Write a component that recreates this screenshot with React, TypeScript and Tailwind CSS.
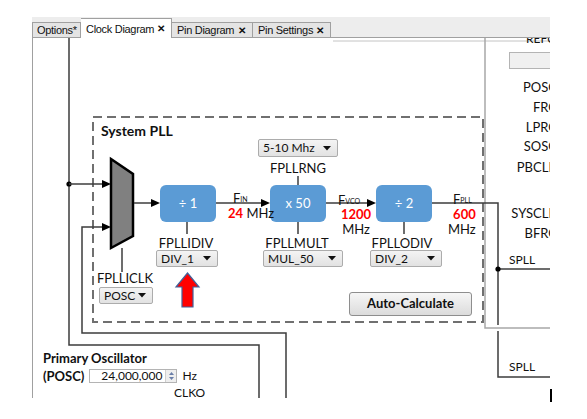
import React from "react";

const ui = "font-['Lato','Noto_Sans',sans-serif]";

function Caret() {
  return (
    <svg width="8" height="5" viewBox="0 0 8 5" className="shrink-0">
      <path d="M0 0 L8 0 L4 4.5 Z" fill="#111" />
    </svg>
  );
}

function Dropdown({ label, className }: { label: string; className: string }) {
  return (
    <div
      className={`absolute flex items-center justify-between pl-[4px] pr-[6px] rounded-[2px] border border-[#acacac] bg-gradient-to-b from-[#f4f4f4] to-[#e2e2e2] text-[12px] leading-none text-[#111] ${className}`}
    >
      <span>{label}</span>
      <Caret />
    </div>
  );
}

function Block({ label, className }: { label: string; className: string }) {
  return (
    <div
      className={`absolute top-[147px] w-[56px] h-[37px] rounded-[6px] bg-[#5b9bd5] flex items-center justify-center text-white text-[13px] ${className}`}
    >
      {label}
    </div>
  );
}

function Label({ text, className }: { text: string; className: string }) {
  return (
    <div className={`absolute w-[100px] text-center text-[13px] leading-[16px] text-[#111] ${className}`}>
      {text}
    </div>
  );
}

function Freq({ sub }: { sub: string }) {
  return (
    <span className="text-[13px] leading-[16px] text-[#111]">
      F<span className="text-[7px] align-[1px]">{sub}</span>
    </span>
  );
}

function Tab({ label, active, first }: { label: string; active?: boolean; first?: boolean }) {
  return (
    <div
      className={`flex justify-between border border-b-0 border-[#a0a0a0] tracking-[-0.3px] ${
        first ? "" : "border-l-0"
      } ${active ? "h-[20px] -mb-px bg-white items-start pt-[2px]" : "h-[15px] bg-[#e4e4e4] items-center"} ${
        label === "Options*" ? "w-[49px] pl-[4px]" : "pl-[5px] pr-[6px]"
      } ${label === "Clock Diagram" ? "w-[91px]" : label === "Pin Diagram" ? "w-[81px]" : label === "Pin Settings" ? "w-[78px]" : ""}`}
    >
      <span>{label}</span>
      {label !== "Options*" && <span className="font-bold text-[10px]">✕</span>}
    </div>
  );
}

const panelLabels = [
  { text: "POSC", gap: "" },
  { text: "FRC", gap: "mt-[4px]" },
  { text: "LPRC", gap: "mt-[4px]" },
  { text: "SOSC", gap: "mt-[3px]" },
  { text: "PBCLK", gap: "mt-[5px]" },
  { text: "SYSCLK", gap: "mt-[30px]" },
  { text: "BFRC", gap: "mt-[4px]" },
];

export default function App() {
  const arrow = (x: number, y: number) => `${x - 9},${y - 4} ${x},${y} ${x - 9},${y + 4}`;

  return (
    <div className={`relative w-[587px] h-[419px] bg-white overflow-hidden ${ui}`}>
      {/* tab strip */}
      <div className="pt-[17px] pl-[32px]">
        <div className="w-[518px] h-[21px] bg-[#ededed] flex items-end border-b border-[#a0a0a0] font-['Liberation_Sans',sans-serif] text-[11px] text-[#111]">
          <Tab label="Options*" first />
          <Tab label="Clock Diagram" active />
          <Tab label="Pin Diagram" />
          <Tab label="Pin Settings" />
        </div>
      </div>

      {/* diagram canvas */}
      <div className="ml-[32px] relative w-[518px] h-[360px] border-l border-[#a0a0a0] overflow-hidden">
        <svg className="absolute inset-0" width="518" height="360" viewBox="32 38 518 360">
          <line x1="332" y1="41" x2="550" y2="41" stroke="#c4c4c4" strokeWidth="1" />
          {/* right panel border */}
          <polyline points="484,38 484,328 550,328" fill="none" stroke="#a8a8a8" strokeWidth="1.5" />
          {/* dashed System PLL frame */}
          <rect x="92" y="117" width="390" height="205" fill="none" stroke="#707070" strokeWidth="2" strokeDasharray="9 5" />
          {/* outer feed lines */}
          <polyline points="68,38 68,345 258,345 258,400" fill="none" stroke="#3c3c3c" strokeWidth="1.5" />
          <circle cx="68" cy="184" r="2.6" fill="#000" />
          <line x1="68" y1="184" x2="103" y2="184" stroke="#3c3c3c" strokeWidth="1.5" />
          <polygon points={arrow(110, 184)} fill="#000" />
          <polyline points="285,400 285,333 81,333 81,227 103,227" fill="none" stroke="#3c3c3c" strokeWidth="1.5" />
          <polygon points={arrow(110, 227)} fill="#000" />
          {/* mux */}
          <polygon points="110,159 132,174 132,236 110,248" fill="#808080" stroke="#000" strokeWidth="2.5" strokeLinejoin="miter" />
          <line x1="121" y1="248" x2="121" y2="272" stroke="#3c3c3c" strokeWidth="1.5" />
          <line x1="133" y1="203" x2="152" y2="203" stroke="#3c3c3c" strokeWidth="1.5" />
          <polygon points={arrow(159, 203)} fill="#000" />
          {/* block links */}
          <line x1="215" y1="203" x2="262" y2="203" stroke="#3c3c3c" strokeWidth="1.5" />
          <polygon points={arrow(269, 203)} fill="#000" />
          <line x1="325" y1="203" x2="368" y2="203" stroke="#3c3c3c" strokeWidth="1.5" />
          <polygon points={arrow(375, 203)} fill="#000" />
          <polyline points="431,203 497,203 497,325" fill="none" stroke="#3c3c3c" strokeWidth="1.5" />
          <polyline points="497,331 497,377 550,377" fill="none" stroke="#3c3c3c" strokeWidth="1.5" />
          <line x1="497" y1="269" x2="550" y2="269" stroke="#3c3c3c" strokeWidth="1.5" />
          <circle cx="497" cy="269" r="2.6" fill="#000" />
          {/* stubs */}
          <line x1="186" y1="222" x2="186" y2="234" stroke="#3c3c3c" strokeWidth="1.5" />
          <line x1="297" y1="222" x2="297" y2="234" stroke="#3c3c3c" strokeWidth="1.5" />
          <line x1="297" y1="176" x2="297" y2="185" stroke="#3c3c3c" strokeWidth="1.5" />
          <line x1="403" y1="222" x2="403" y2="234" stroke="#3c3c3c" strokeWidth="1.5" />
          {/* red pointer */}
          <polygon points="186.5,273 198,287 192,287 192,307 181,307 181,287 175,287" fill="#ff0000" stroke="#41619a" strokeWidth="1.2" />
        </svg>

        <div className="absolute left-[68px] top-[84px] text-[14px] leading-[18px] font-bold text-[#111]">System PLL</div>

        <Block label="÷ 1" className="left-[127px]" />
        <Block label="x 50" className="left-[237px]" />
        <Block label="÷ 2" className="left-[343px]" />

        <Dropdown label="5-10 Mhz" className="left-[225px] top-[101px] w-[80px] h-[18px]" />
        <Dropdown label="DIV_1" className="left-[123px] top-[212px] w-[62px] h-[17px]" />
        <Dropdown label="MUL_50" className="left-[230px] top-[212px] w-[80px] h-[17px]" />
        <Dropdown label="DIV_2" className="left-[337px] top-[212px] w-[72px] h-[17px]" />
        <Dropdown label="POSC" className="left-[66px] top-[249px] w-[54px] h-[17px]" />

        <Label text="FPLLRNG" className="left-[215px] top-[122px]" />
        <Label text="FPLLIDIV" className="left-[103px] top-[197px]" />
        <Label text="FPLLMULT" className="left-[214px] top-[197px]" />
        <Label text="FPLLODIV" className="left-[319px] top-[197px]" />
        <Label text="FPLLICLK" className="left-[42px] top-[232px]" />

        <div className="absolute left-[200px] top-[147px]"><Freq sub="IN" /></div>
        <div className="absolute left-[195px] top-[167px] text-[13px] leading-[16px] text-[#111]">
          <span className="font-bold text-[#ff0000]">24</span> MHz
        </div>
        <div className="absolute left-[305px] top-[149px]"><Freq sub="VCO" /></div>
        <div className="absolute left-[308px] top-[169px] flex flex-col items-center text-[13px] leading-[15px] text-[#111]">
          <span className="font-bold text-[#ff0000]">1200</span>
          <span>MHz</span>
        </div>
        <div className="absolute left-[420px] top-[148px]"><Freq sub="PLL" /></div>
        <div className="absolute left-[415px] top-[169px] flex flex-col items-end text-[13px] leading-[15px] text-[#111]">
          <span className="font-bold text-[#ff0000]">600</span>
          <span>MHz</span>
        </div>

        <div className="absolute left-[316px] top-[254px] w-[123px] h-[24px] rounded-[3px] border border-[#8e8e8e] bg-gradient-to-b from-[#f6f6f6] to-[#dcdcdc] flex items-center justify-center text-[13px] font-bold text-[#111]">
          Auto-Calculate
        </div>

        {/* right panel (scrolled, clipped at the right edge) */}
        <div className="absolute left-[476px] top-[-7px] w-[60px] flex flex-col text-[13px] leading-[16px] text-[#111]">
          <div className="pl-[17px] text-[12px]">REFO</div>
          <div className="mt-[5px] w-[60px] h-[17px] border border-[#b4b4b4] bg-[#f0f0f0]" />
          <div className="mt-[10px] flex flex-col items-end pr-[12px] whitespace-nowrap">
            {panelLabels.map((l) => (
              <div key={l.text + l.gap} className={l.gap}>{l.text}</div>
            ))}
          </div>
          <div className="mt-[11px] text-[12px]">SPLL</div>
          <div className="mt-[91px] text-[12px]">SPLL</div>
        </div>

        {/* primary oscillator */}
        <div className="absolute left-[10px] top-[311px] flex flex-col text-[#111]">
          <div className="text-[13px] leading-[18px] font-bold">Primary Oscillator</div>
          <div className="flex items-center gap-[5px]">
            <span className="text-[13px] leading-[18px] font-bold">(POSC)</span>
            <div className="w-[88px] h-[14px] border border-[#b4b4b4] bg-white flex items-center">
              <span className="flex-1 text-right pr-[3px] text-[12px] leading-none">24,000,000</span>
              <div className="w-[11px] h-full border-l border-[#cfcfcf] bg-[#eeeeee] flex flex-col items-center justify-center gap-[2px]">
                <svg width="5" height="3" viewBox="0 0 5 3"><path d="M0 3 L2.5 0 L5 3 Z" fill="#6a7ea8" /></svg>
                <svg width="5" height="3" viewBox="0 0 5 3"><path d="M0 0 L5 0 L2.5 3 Z" fill="#6a7ea8" /></svg>
              </div>
            </div>
            <span className="text-[12px] leading-[16px]">Hz</span>
          </div>
          <div className="pl-[131px] text-[12px] leading-[16px]">CLKO</div>
        </div>
      </div>

      <div className="absolute left-[550px] top-[389px] w-[2px] h-[13px] bg-black" />
    </div>
  );
}
